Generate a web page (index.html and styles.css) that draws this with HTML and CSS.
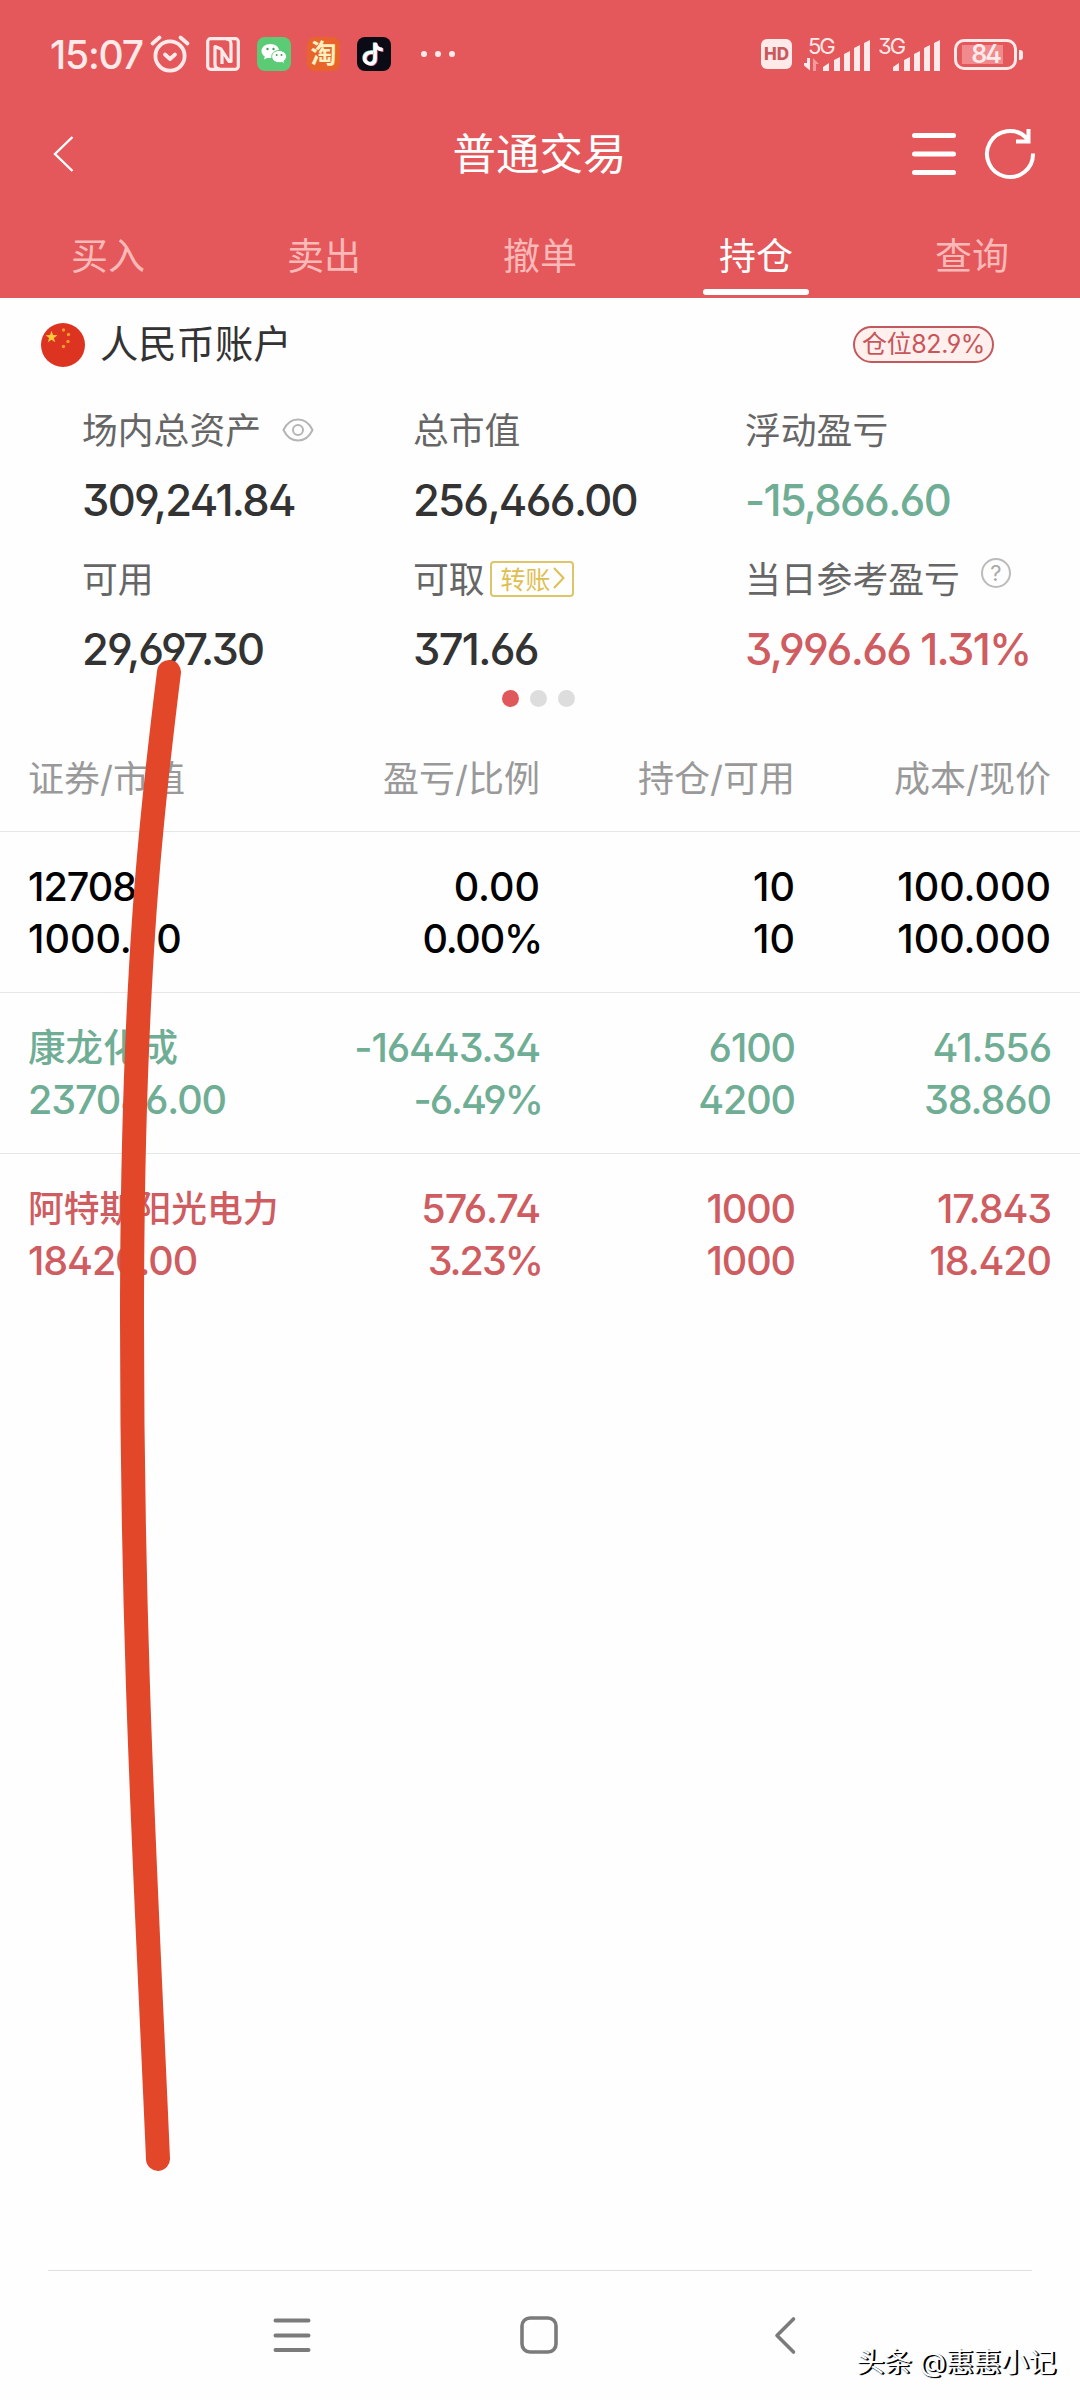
FILE: index.html
```html
<!DOCTYPE html>
<html lang="zh-CN">
<head>
  <meta charset="UTF-8" />
  <meta name="viewport" content="width=device-width, initial-scale=1.0"/>
  <title>普通交易</title>
  <link rel="stylesheet" href="styles.css">
</head>
<body>
<div class="phone">

<header class="header">
  <!-- Status bar -->
  <div class="status">
    <span class="time">15:07</span>
    <svg class="alarm" width="40" height="38" viewBox="0 0 40 38" fill="none" stroke="#ffe9e9" stroke-width="3.8" stroke-linecap="round" stroke-linejoin="round">
      <circle cx="20" cy="21" r="14.6"/>
      <path d="M15 19.500l5 4.500 5-4.500M2.500 8.500l7-6M37.500 8.500l-7-6"/>
    </svg>
    <svg class="nfc" width="34" height="34" viewBox="0 0 34 34" fill="none" stroke="#ffe9e9" stroke-width="3.2" stroke-linejoin="round">
      <rect x="1.700" y="1.700" width="30.600" height="30.600" rx="3"/>
      <path d="M14 32C10 32 9 30 9 27V9.500l6 2.500 8 12.500M20 2c4 0 5 2 5 5v17.500h-3M16 14v13"/>
    </svg>
    <svg class="app" width="34" height="34" viewBox="0 0 34 34">
      <rect width="34" height="34" rx="8" fill="#5ccb75"/>
      <path d="M13.500 7C8 7 4.500 10.300 4.500 14c0 2.300 1.300 4.200 3.300 5.500L7 22.500l3.500-1.800c1 .3 2 .4 3 .4 5 0 8.800-3.200 8.800-7S18.500 7 13.500 7z" fill="#fff"/>
      <path d="M22 13.500c-4.300 0-7.300 2.800-7.300 6.100s3 6.100 7.300 6.100c.9 0 1.800-.1 2.600-.4l3 1.600-.7-2.700c1.600-1.200 2.600-2.800 2.600-4.600 0-3.300-3.200-6.100-7.500-6.100z" fill="#fff" stroke="#5ccb75"/>
      <g fill="#4a9a60"><circle cx="10.500" cy="12" r="1.200"/><circle cx="16.500" cy="12" r="1.200"/><circle cx="19.700" cy="18" r="1"/><circle cx="24.500" cy="18" r="1"/></g>
    </svg>
    <span class="app taobao">淘</span>
    <svg class="app" width="34" height="34" viewBox="0 0 34 34" fill="none" stroke-width="3.400">
      <rect width="34" height="34" rx="8" fill="#0b0b16"/>
      <path d="M15.500 15c-5-.8-8.500 2-8.500 6s5 6.800 8.500 4.500c1.800-1.200 2-3 2-5V5.500c.5 4 3.500 6.500 7.500 6.700" stroke="#6fe3e0"/>
      <path d="M17 16c-5-.8-8.500 2-8.500 6s5 6.800 8.500 4.500c1.800-1.200 2-3 2-5V6.500c.5 4 3.500 6.500 7.500 6.700" stroke="#ee5a72"/>
      <path d="M16.200 15.500c-5-.8-8.500 2-8.500 6s5 6.800 8.500 4.500c1.800-1.200 2-3 2-5V6c.5 4 3.500 6.500 7.500 6.700" stroke="#fff"/>
    </svg>
    <span class="more"><i></i><i></i><i></i></span>
    <span class="hd">HD</span>
    <svg class="signal" width="67" height="40" viewBox="0 0 67 40" fill="#ffe9e9">
      <text x="4" y="20" class="net">5G</text>
      <path d="M6 24v12.500L0 31.500V29h3v-5zM10 36.500V24" />
      <path d="M9 37V24l6 6h-3v7z" fill="#f59a9c"/>
      <path d="M19 37v-4l6-4v8zM30 37V26l6-3v14zM40 37V20l6-3v20zM50 37V14l6-3v26zM60 37V9l6-3v31z"/>
    </svg>
    <svg class="signal2" width="63" height="40" viewBox="0 0 63 40" fill="#ffe9e9">
      <text x="0" y="20" class="net">3G</text>
      <path d="M15 37v-4l6-4v8zM26 37V26l6-3v14zM36 37V20l6-3v20zM46 37V14l6-3v26zM56 37V9l6-3v31z"/>
    </svg>
    <span class="battery">84</span>
  </div>

  <!-- Title bar -->
  <div class="titlebar">
    <svg class="back" width="24" height="40" viewBox="0 0 24 40" fill="none" stroke="#fff" stroke-width="2.400"><path d="M20.500 3L3 20l17.500 17"/></svg>
    <h1>普通交易</h1>
    <div class="actions">
      <svg width="44" height="52" viewBox="0 0 44 52" stroke="#fff" stroke-width="5" stroke-linecap="round"><path d="M2.500 7.500h39M2.500 26h39M2.500 44.500h39"/></svg>
      <svg width="52" height="52" viewBox="0 0 52 52" fill="none" stroke="#fff" stroke-width="4"><path d="M48 25.500A23 23 0 1 1 41 9.500L43 13M43.500 1v12.500H31"/></svg>
    </div>
  </div>

  <nav class="tabs">
    <a>买入</a>
    <a>卖出</a>
    <a>撤单</a>
    <a class="active">持仓</a>
    <a>查询</a>
  </nav>
</header>

<!-- Account summary -->
<section class="account">
  <div class="account-head">
    <svg width="44" height="44" viewBox="0 0 44 44">
      <circle cx="22" cy="22" r="22" fill="#dc3420"/>
      <path d="M10.500 7.800l1.500 4.300 4.500.1-3.600 2.700 1.300 4.400-3.700-2.600-3.700 2.600 1.300-4.400-3.600-2.700 4.500-.1z" fill="#ffc93c"/>
      <g fill="#f59b2c"><circle cx="22.500" cy="7" r="1.700"/><circle cx="27.500" cy="11.500" r="1.700"/><circle cx="27" cy="18.500" r="1.700"/><circle cx="22.500" cy="23.500" r="1.700"/></g>
    </svg>
    <span class="account-name">人民币账户</span>
    <span class="position">仓位82.9%</span>
  </div>

  <div class="summary">
    <div class="cell">
      <div class="label">场内总资产
        <svg class="eye" width="32" height="24" viewBox="0 0 32 24" fill="none" stroke="#b5b5b5" stroke-width="2"><path d="M1.500 12C8-2 24-2 30.500 12 24 26 8 26 1.500 12z" /><circle cx="16" cy="12" r="5"/></svg>
      </div>
      <div class="value">309,241.84</div>
    </div>
    <div class="cell">
      <div class="label">总市值</div>
      <div class="value">256,466.00</div>
    </div>
    <div class="cell">
      <div class="label">浮动盈亏</div>
      <div class="value green">-15,866.60</div>
    </div>
    <div class="cell">
      <div class="label">可用</div>
      <div class="value">29,697.30</div>
    </div>
    <div class="cell">
      <div class="label">可取
        <span class="transfer">转账<svg width="12" height="22" viewBox="0 0 12 22" fill="none" stroke="#dfbf52" stroke-width="2"><path d="M1 1l9.500 10L1 21"/></svg></span>
      </div>
      <div class="value">371.66</div>
    </div>
    <div class="cell">
      <div class="label">当日参考盈亏 <span class="help">?</span></div>
      <div class="value red">3,996.66 1.31%</div>
    </div>
  </div>

  <div class="dots"><i class="on"></i><i></i><i></i></div>
</section>

<!-- Holdings -->
<section class="holdings">
  <div class="row head">
    <div>证券/市值</div>
    <div>盈亏/比例</div>
    <div>持仓/可用</div>
    <div>成本/现价</div>
  </div>
  <div class="row">
    <div><p class="code">12708</p><p>1000.00</p></div>
    <div><p>0.00</p><p class="rate">0.00%</p></div>
    <div><p>10</p><p>10</p></div>
    <div><p>100.000</p><p>100.000</p></div>
  </div>
  <div class="row green">
    <div><p class="name">康龙化成</p><p>237046.00</p></div>
    <div><p>-16443.34</p><p class="rate">-6.49%</p></div>
    <div><p>6100</p><p>4200</p></div>
    <div><p>41.556</p><p>38.860</p></div>
  </div>
  <div class="row red">
    <div><p class="name long">阿特斯阳光电力</p><p>18420.00</p></div>
    <div><p>576.74</p><p class="rate">3.23%</p></div>
    <div><p>1000</p><p>1000</p></div>
    <div><p>17.843</p><p>18.420</p></div>
  </div>
</section>

<!-- System navigation -->
<footer class="navbar">
  <svg width="40" height="40" viewBox="0 0 40 40" stroke="#7b7b7b" stroke-width="4" stroke-linecap="round"><path d="M3.500 5.500h33M3.500 20.500h33M3.500 35h33"/></svg>
  <svg width="40" height="40" viewBox="0 0 40 40" fill="none" stroke="#7b7b7b" stroke-width="3.600"><rect x="3" y="3" width="34" height="34" rx="8"/></svg>
  <svg width="40" height="40" viewBox="0 0 40 40" fill="none" stroke="#7b7b7b" stroke-width="3.600" stroke-linecap="round" stroke-linejoin="round"><path d="M27.500 4L11 20.500 27.500 37"/></svg>
</footer>

<!-- Hand-drawn marker line -->
<svg class="marker" width="1080" height="2400" viewBox="0 0 1080 2400" fill="none">
  <path d="M169 672C153 800 132 970 132 1320C132 1650 146 1880 158 2159" stroke="#e24729" stroke-width="24" stroke-linecap="round"/>
</svg>
<div class="watermark">头条 @惠惠小记</div>

</div>
</body>
</html>
```
FILE: styles.css
```css
* { box-sizing: border-box; }

body, h1, p { margin: 0; }

body {
  background: #fefefe;
  font-family: Inter, "Noto Sans CJK SC", sans-serif;
  font-feature-settings: "ss01", "cv03", "cv04", "cv09";
  color: #333;
}

.phone {
  position: relative;
  width: 1080px;
  height: 2400px;
  overflow: hidden;
  display: flex;
  flex-direction: column;
}

svg { display: block; flex: none; overflow: visible; }
i { display: block; }

/* Header */
.header {
  height: 298px;
  background: #e4585b;
  color: #fff;
  display: flex;
  flex-direction: column;
}

.status {
  height: 108px;
  padding: 0 63px 0 50px;
  display: flex;
  align-items: center;
  color: #ffe9e9;
}

.time {
  width: 100px;
  font-size: 39px;
  font-weight: 500;
  letter-spacing: -1.2px;
}

.nfc { margin-left: 16px; }
.app { margin-left: 16.5px; }

.taobao {
  width: 33px;
  height: 34px;
  border-radius: 8px;
  background: #e8642c;
  color: #fff0c0;
  font-size: 26px;
  font-weight: bold;
  line-height: 33px;
  text-align: center;
}

.more { display: flex; gap: 8px; margin-left: 30px; }
.more i { width: 6px; height: 6px; border-radius: 50%; background: #ffe9e9; }

.hd {
  width: 31px;
  height: 30px;
  margin-left: auto;
  border-radius: 6px;
  background: #ffe9e9;
  color: #c9595c;
  font-size: 17px;
  font-weight: 800;
  line-height: 30px;
  text-align: center;
}

.signal { margin-left: 12px; }
.signal2 { margin-left: 7px; }
.net { font-size: 22px; letter-spacing: -2px; }

.battery {
  position: relative;
  width: 63px;
  height: 31px;
  margin-left: 13px;
  border: 3px solid #ffe9e9;
  border-radius: 10px;
  background: linear-gradient(#f08a8c, #f08a8c) 5px 50% / 41px 19px no-repeat;
  font-size: 25px;
  font-weight: 600;
  line-height: 25px;
  letter-spacing: -2px;
  text-align: center;
}

.battery::after {
  content: "";
  position: absolute;
  right: -9px;
  top: 8px;
  width: 4px;
  height: 10px;
  border-radius: 0 3px 3px 0;
  background: #ffe9e9;
}

.titlebar {
  height: 92px;
  padding: 0 43px 0 52px;
  display: grid;
  grid-template-columns: 1fr auto 1fr;
  align-items: center;
}

.titlebar h1 {
  font-size: 43.5px;
  font-weight: 400;
  padding: 0 10px 6px 0;
}

.actions { display: flex; justify-content: flex-end; gap: 29px; }

.tabs { flex: 1; display: grid; grid-template-columns: repeat(5, 1fr); }

.tabs a {
  display: flex;
  flex-direction: column;
  align-items: center;
  justify-content: space-between;
  padding-top: 30px;
  font-size: 37px;
  line-height: 54px;
  color: #fbb9b8;
}

.tabs .active { color: #fff; }

.tabs .active::after {
  content: "";
  width: 106px;
  height: 6px;
  margin-bottom: 3px;
  border-radius: 3px;
  background: #fff;
}

/* Account summary */
.account-head {
  height: 94px;
  padding: 0 86px 0 41px;
  display: flex;
  align-items: center;
}

.account-name { margin-left: 15px; padding-bottom: 7px; font-size: 38.3px; }

.position {
  width: 141px;
  height: 37px;
  margin: -2px 0 0 auto;
  border: 2px solid #c2595c;
  border-radius: 19px;
  background: #fff0ee;
  color: #c9555a;
  font-size: 25px;
  line-height: 32px;
  text-align: center;
  letter-spacing: -0.4px;
}

.summary {
  padding: 8px 0 0 82px;
  display: grid;
  grid-template-columns: 331px 332px 1fr;
}

.cell { height: 149px; }

.label {
  display: flex;
  align-items: center;
  height: 60px;
  padding-bottom: 5px;
  font-size: 35.8px;
  color: #666;
}

.eye { margin: 5px 0 0 21px; }

.value {
  font-size: 43.5px;
  font-weight: 500;
  line-height: 80px;
  letter-spacing: -1.7px;
  white-space: nowrap;
}

.transfer {
  display: flex;
  align-items: center;
  gap: 2px;
  height: 36px;
  margin: 5px 0 0 5px;
  padding: 0 7px 3px 9px;
  border: 2px solid #dfc56a;
  border-radius: 4px;
  font-size: 25px;
  color: #dfbf52;
}

.help {
  width: 30px;
  height: 30px;
  margin: -7px 0 0 21px;
  border: 2px solid #bbb;
  border-radius: 50%;
  font-size: 22px;
  line-height: 26px;
  text-align: center;
  color: #aaa;
}

.dots { display: flex; justify-content: center; gap: 11px; margin-top: -8px; padding-right: 3px; }
.dots i { width: 17px; height: 17px; border-radius: 50%; background: #ddd; }
.dots .on { background: #e0585c; }

.green, .row.green { color: #6fae95; }
.red, .row.red { color: #cf5c60; }

/* Holdings */
.holdings { margin-top: 18px; }

.row {
  height: 161px;
  padding: 29px 29px 0 28px;
  display: grid;
  grid-template-columns: 240px 272px 255px 256px;
  border-bottom: 1px solid #e6e6e6;
  font-size: 39.5px;
  font-weight: 500;
  line-height: 52px;
  color: #000;
}

.row > div + div { text-align: right; }
.row:last-child { border-bottom: 0; }
.row p { height: 52px; white-space: nowrap; }
.row.green p, .row.red p { letter-spacing: -1.1px; }
.row .code { letter-spacing: -1px; }
.row .rate { letter-spacing: -1.2px; margin-right: -2px; }
.row.green .rate, .row.red .rate { letter-spacing: -2px; }
.row.green .name { font-size: 37.5px; letter-spacing: 0; }
.row.red .long { font-size: 35.8px; letter-spacing: 0; }

.row.head {
  height: 107px;
  padding-top: 28px;
  font-size: 36px;
  font-weight: 400;
  color: #999;
}

/* System navigation */
.navbar {
  height: 130px;
  margin: auto 48px 0;
  padding: 44px 0 0 224px;
  border-top: 1px solid #e0e0e0;
  display: flex;
  gap: 207px;
}

.marker { position: absolute; left: 0; top: 0; }

.watermark {
  position: absolute;
  right: 24px;
  bottom: 18px;
  font-size: 27.5px;
  line-height: 40px;
  color: #fff;
  text-shadow: 1px 1px 1px #000, 2px 1px 0 #000;
}
```
